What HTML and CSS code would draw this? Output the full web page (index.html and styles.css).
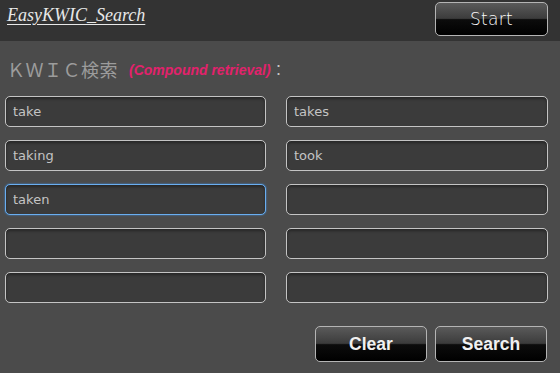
FILE: index.html
```html
<!DOCTYPE html>
<html lang="ja">
<head>
    <meta charset="UTF-8">
    <title>EasyKWIC_Search</title>
    <link rel="stylesheet" href="styles.css">
</head>
<body>

<div class="header">
    <a class="appTitle" href="#">EasyKWIC_Search</a>
    <button class="blackBtn startBtn">Start</button>
</div>

<div class="main">
    <div class="kwicTitle">
        ＫＷＩＣ検索<span class="compound">(Compound retrieval)</span><span class="colon">：</span>
    </div>

    <form class="wordGrid" action="">
        <input class="word" type="text" value="take">
        <input class="word" type="text" value="takes">
        <input class="word" type="text" value="taking">
        <input class="word" type="text" value="took">
        <input class="word focused" type="text" value="taken">
        <input class="word" type="text">
        <input class="word" type="text">
        <input class="word" type="text">
        <input class="word" type="text">
        <input class="word" type="text">
    </form>

    <div class="actions">
        <button class="blackBtn boldBtn">Clear</button>
        <button class="blackBtn boldBtn">Search</button>
    </div>
</div>

</body>
</html>
```

FILE: styles.css
```css
/* page */
body {
    margin: 0;
    padding: 0;
    background: #4b4b4b;
    font-family: "DejaVu Sans", sans-serif;
    height: 373px;
    overflow: hidden;
}

.header {
    height: 41px;
    background: #333333;
    display: flex;
    justify-content: space-between;
    align-items: flex-start;
    padding: 0 12px 0 7px;
}

.appTitle {
    font-family: "Liberation Serif", serif;
    font-style: italic;
    font-size: 18px;
    color: #e8e8e8;
    text-decoration: underline;
    text-underline-offset: 3px;
    margin-top: 5px;
}

/* black glossy buttons */
.blackBtn {
    width: 113px;
    border: 1px solid #b4b4b4;
    border-radius: 5px;
    background: linear-gradient(#5a5a5a 0%, #3c3c3c 48%, #0c0c0c 52%, #000 100%);
    color: #f0f0f0;
    cursor: pointer;
    padding: 0;
}

.startBtn {
    height: 34px;
    margin-top: 2px;
    font-family: "DejaVu Sans", sans-serif;
    font-size: 17px;
    font-weight: 200;
    color: #fafafa;
    letter-spacing: 0.3px;
}

.main {
    padding: 0 13px 0 5px;
}

.kwicTitle {
    height: 55px;
    padding-left: 2px;
    display: flex;
    align-items: center;
    font-family: "Noto Sans CJK JP", sans-serif;
    font-size: 18px;
    color: #9c9c9c;
    letter-spacing: 0.5px;
}

.compound {
    font-family: "Liberation Sans", sans-serif;
    font-style: italic;
    font-weight: bold;
    font-size: 14px;
    color: #e2226c;
    letter-spacing: 0;
    margin-left: 11px;
    margin-top: 2px;
}

.colon {
    font-size: 14px;
    color: #c8c8c8;
    margin-left: 1px;
}

.wordGrid {
    display: grid;
    grid-template-columns: 261px 262px;
    column-gap: 20px;
    row-gap: 13px;
}

.word {
    box-sizing: border-box;
    height: 31px;
    border: 1px solid #c4c4c4;
    border-radius: 5px;
    background: #3b3b3b;
    box-shadow: inset 0 2px 3px rgba(0,0,0,0.35);
    color: #c4c4c4;
    font-family: "DejaVu Sans", sans-serif;
    font-size: 13px;
    padding: 0 7px;
    outline: none;
}

.word.focused {
    border-color: #6aaef0;
    box-shadow: 0 0 2px #3d8fe0, inset 0 2px 3px rgba(0,0,0,0.35);
}

.actions {
    display: flex;
    justify-content: flex-end;
    gap: 8px;
    margin-top: 23px;
}

.boldBtn {
    width: 112px;
    height: 36px;
    font-family: "Liberation Sans", sans-serif;
    font-weight: bold;
    font-size: 17.5px;
}
```
